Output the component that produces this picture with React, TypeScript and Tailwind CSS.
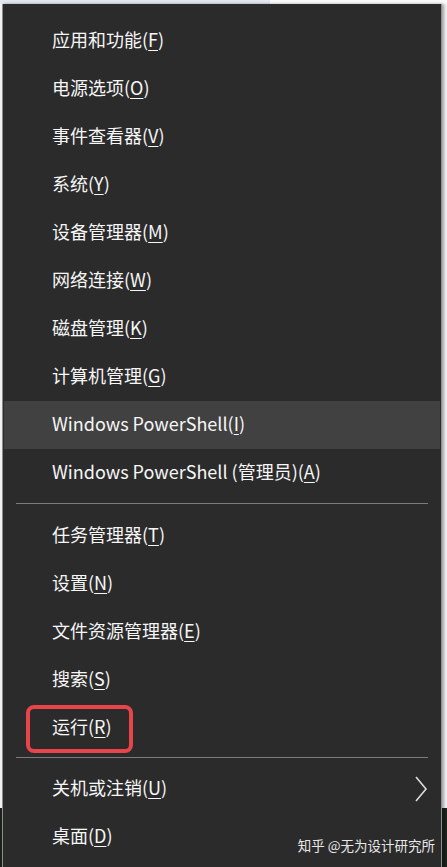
import React from "react";

type Item = { label: string; key: string; active?: boolean; sub?: boolean };

const groupA: Item[] = [
  { label: "应用和功能", key: "F" },
  { label: "电源选项", key: "O" },
  { label: "事件查看器", key: "V" },
  { label: "系统", key: "Y" },
  { label: "设备管理器", key: "M" },
  { label: "网络连接", key: "W" },
  { label: "磁盘管理", key: "K" },
  { label: "计算机管理", key: "G" },
  { label: "Windows PowerShell", key: "I", active: true },
  { label: "Windows PowerShell (管理员)", key: "A" },
];

const groupB: Item[] = [
  { label: "任务管理器", key: "T" },
  { label: "设置", key: "N" },
  { label: "文件资源管理器", key: "E" },
  { label: "搜索", key: "S" },
  { label: "运行", key: "R" },
];

const groupC: Item[] = [
  { label: "关机或注销", key: "U", sub: true },
  { label: "桌面", key: "D" },
];

function Row({ item }: { item: Item }) {
  return (
    <div
      className={`h-[48px] flex items-center justify-between pl-[48px] pr-[12px] pb-[4px] text-[18px] text-[#f6f6f6] ${
        item.active ? "bg-[#414141]" : ""
      }`}
    >
      <span className="whitespace-nowrap">
        {item.label}(<span className="underline underline-offset-[3px] decoration-1">{item.key}</span>)
      </span>
      {item.sub && (
        <svg width="14" height="26" viewBox="0 0 14 26" fill="none" className="mt-[4px]">
          <polyline points="2,1 12,13 2,25" stroke="#dcdcdc" strokeWidth="1.6" />
        </svg>
      )}
    </div>
  );
}

function Separator({ top, bottom }: { top: string; bottom: string }) {
  return <div className={`mx-[12px] h-px bg-[#7c7c7c] ${top} ${bottom}`} />;
}

export default function App() {
  return (
    <div className="relative w-[447px] h-[867px] overflow-hidden bg-[linear-gradient(to_bottom,#f3f3f5_808px,#1d221d_808px)] font-['Noto_Sans_CJK_SC','Noto_Sans',sans-serif]">
      <div className="flex h-[4px]">
        <div className="w-[270px] bg-[#e3e8f1]" />
        <div className="flex-1 bg-[#fbfbfb]" />
      </div>

      <div className="relative z-10 ml-[2px] w-[440px] bg-[#2b2b2b] border-x border-[#8e8e8e] px-[1px] pt-[13px] pb-[20px] shadow-[2px_0_3px_rgba(0,0,0,0.35)]">
        {groupA.map((it) => (
          <Row key={it.key} item={it} />
        ))}
        <Separator top="mt-[6px]" bottom="mb-[8px]" />
        {groupB.map((it) => (
          <Row key={it.key} item={it} />
        ))}
        <Separator top="mt-[5px]" bottom="mb-[7px]" />
        {groupC.map((it) => (
          <Row key={it.key} item={it} />
        ))}
      </div>

      {/* annotation */}
      <div className="absolute z-20 left-[26px] top-[705px] w-[107px] h-[48px] border-[4px] border-[#e8444a] rounded-[8px]" />

      <div className="absolute z-20 right-[12px] top-[835px] text-[13.5px] leading-[20px] text-[#e8e8e8] whitespace-nowrap">
        知乎 @无为设计研究所
      </div>
    </div>
  );
}
